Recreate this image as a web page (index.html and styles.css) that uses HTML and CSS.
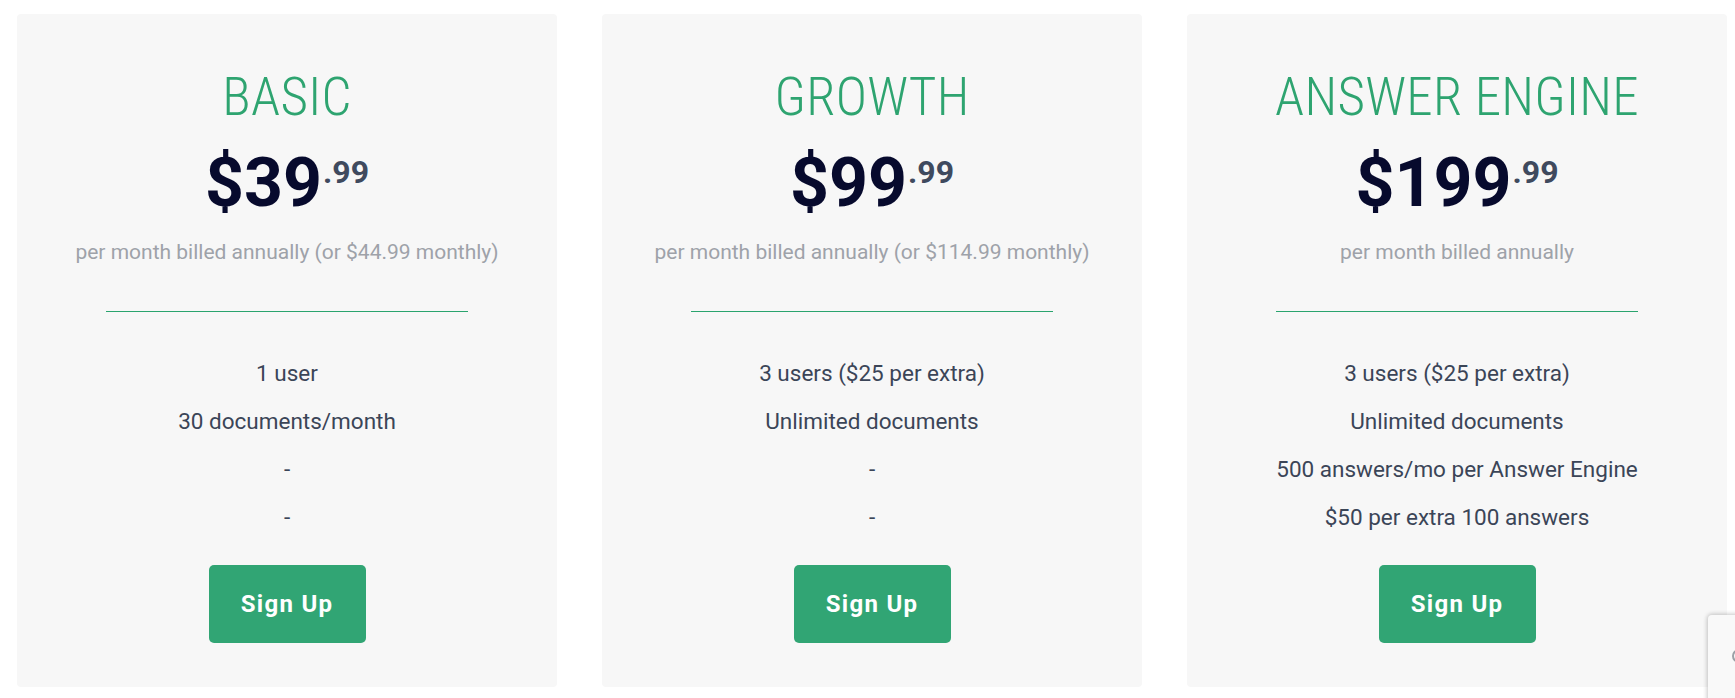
FILE: index.html
```html
<!DOCTYPE html>
<html lang="en">
<head>
<meta charset="utf-8">
<title>Pricing</title>
<link rel="stylesheet" href="styles.css">
</head>
<body>
<div class="pricing">
  <div class="card">
    <h2 class="plan">BASIC</h2>
    <div class="price"><span class="amount">$39</span><span class="cents">.99</span></div>
    <p class="billing">per month billed annually (or $44.99 monthly)</p>
    <div class="divider"></div>
    <ul class="features">
      <li>1 user</li>
      <li>30 documents/month</li>
      <li>-</li>
      <li>-</li>
    </ul>
    <a class="signup" href="#">Sign Up</a>
  </div>
  <div class="card">
    <h2 class="plan">GROWTH</h2>
    <div class="price"><span class="amount">$99</span><span class="cents">.99</span></div>
    <p class="billing">per month billed annually (or $114.99 monthly)</p>
    <div class="divider"></div>
    <ul class="features">
      <li>3 users ($25 per extra)</li>
      <li>Unlimited documents</li>
      <li>-</li>
      <li>-</li>
    </ul>
    <a class="signup" href="#">Sign Up</a>
  </div>
  <div class="card">
    <h2 class="plan">ANSWER ENGINE</h2>
    <div class="price"><span class="amount">$199</span><span class="cents">.99</span></div>
    <p class="billing">per month billed annually</p>
    <div class="divider"></div>
    <ul class="features">
      <li>3 users ($25 per extra)</li>
      <li>Unlimited documents</li>
      <li>500 answers/mo per Answer Engine</li>
      <li>$50 per extra 100 answers</li>
    </ul>
    <a class="signup" href="#">Sign Up</a>
  </div>
</div>
<div class="badge"><span class="badge-logo"></span></div>
</body>
</html>
```
FILE: styles.css
```css
html, body {
  margin: 0;
  padding: 0;
  background: #ffffff;
}
body {
  font-family: Roboto, "Liberation Sans", Arial, sans-serif;
  overflow: hidden;
}
.pricing {
  display: grid;
  grid-template-columns: repeat(3, 540px);
  column-gap: 45px;
  padding: 14px 8px 11px 17px;
}
.card {
  background: #f7f7f7;
  border-radius: 4px;
  height: 673px;
  box-sizing: border-box;
  padding-top: 57px;
  text-align: center;
  display: flex;
  flex-direction: column;
  align-items: center;
}
.plan {
  margin: 0;
  font-family: "Roboto Condensed", Roboto, sans-serif;
  font-weight: 300;
  font-size: 53px;
  line-height: 53px;
  color: #2ea470;
  letter-spacing: 0.3px;
}
.price {
  margin-top: 25px;
  display: flex;
  align-items: flex-start;
  justify-content: center;
}
.amount {
  font-weight: 700;
  font-size: 68px;
  line-height: 68px;
  color: #070a2d;
}
.cents {
  font-weight: 700;
  font-size: 32px;
  line-height: 32px;
  margin-top: 7px;
  margin-left: 1px;
  color: #3f4a5e;
}
.billing {
  margin: 20px 0 0;
  font-size: 21px;
  line-height: 30px;
  color: #9ea2a9;
}
.divider {
  width: 362px;
  height: 0;
  margin: 44px 0 0;
  border-top: 1px solid #2aa46e;
}
.features {
  list-style: none;
  margin: 37px 0 0;
  padding: 0;
  font-size: 22.5px;
  line-height: 48px;
  color: #3b4557;
}
.signup {
  margin-top: 24px;
  width: 157px;
  height: 78px;
  border-radius: 5px;
  background: #31a574;
  color: #ffffff;
  text-decoration: none;
  font-weight: 700;
  font-size: 24px;
  letter-spacing: 1.3px;
  display: flex;
  align-items: center;
  justify-content: center;
}
.badge {
  position: fixed;
  left: 1708px;
  top: 615px;
  width: 256px;
  height: 90px;
  background: #f9f9f9;
  border-radius: 4px 0 0 0;
  box-shadow: 0 0 4px 1px rgba(0, 0, 0, 0.22);
}
.badge-logo {
  position: absolute;
  left: 24px;
  top: 34px;
  width: 10px;
  height: 10px;
  border-radius: 50%;
  border: 2px solid #9aa0a6;
}
```
